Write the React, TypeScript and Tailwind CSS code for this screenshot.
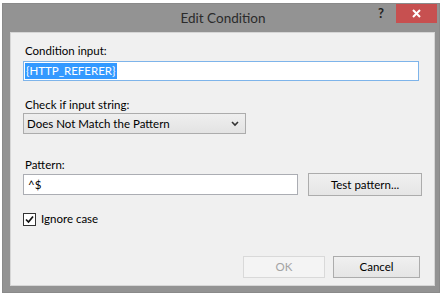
import React from "react";

const font = { fontFamily: 'Lato, "Noto Sans", sans-serif' };

export default function App() {
  return (
    <div className="w-[442px] h-[300px] bg-white pt-[3px] pl-[2px]" style={font}>
      <div className="w-[438px] h-[290px] bg-[#939393] border border-[#8a8a8a] flex flex-col">
        {/* Title bar */}
        <div className="h-[28px] flex relative shrink-0">
          <div className="flex-1 flex items-center justify-center pt-[1px] text-[13.5px] text-[#2b2b2b] pl-[4px]">
            Edit Condition
          </div>
          <div className="absolute right-[2px] top-0 flex items-start">
            <div className="w-[20px] h-[19px] flex items-center justify-center text-[13px] font-bold text-[#222] mr-[5px]">?</div>
            <div className="w-[41px] h-[19px] bg-[#c75050] flex items-center justify-center">
              <svg width="9" height="9" viewBox="0 0 9 9">
                <path d="M1 1 L8 8 M8 1 L1 8" stroke="white" strokeWidth="2" />
              </svg>
            </div>
          </div>
        </div>
        {/* Content */}
        <div className="ml-[7px] mr-[4px] h-[254px] bg-[#f0f0f0] border border-[#d6d6d6] pl-[12px] text-[11.5px] text-black flex flex-col">
          <div className="mt-[10px] ml-[2px] leading-[16px]">Condition input:</div>
          <div className="mt-[2px] w-[396px] h-[20px] bg-white border border-[#7eb4ea] flex items-center pl-[1px]">
            <span className="bg-[#3399ff] text-white leading-[16px] px-[1px]">{"{HTTP_REFERER}"}</span>
          </div>
          <div className="mt-[16px] ml-[2px] leading-[16px]">Check if input string:</div>
          <div className="mt-[0px] w-[223px] h-[21px] bg-gradient-to-b from-[#efefef] to-[#e3e3e3] border border-[#acacac] flex items-center justify-between pl-[3px] pr-[6px]">
            <span className="leading-[16px]">Does Not Match the Pattern</span>
            <svg width="8" height="6" viewBox="0 0 8 6">
              <path d="M1 1 L4 4 L7 1" stroke="#333" strokeWidth="1.6" fill="none" />
            </svg>
          </div>
          <div className="mt-[23px] ml-[2px] leading-[16px]">Pattern:</div>
          <div className="flex items-center mt-[0px]">
            <div className="w-[275px] h-[21px] bg-white border border-[#abadb3] flex items-center pl-[4px] leading-[16px]">^$</div>
            <div className="ml-[10px] w-[114px] h-[23px] bg-gradient-to-b from-[#f0f0f0] to-[#e5e5e5] border border-[#acacac] flex items-center justify-center">
              Test pattern...
            </div>
          </div>
          <div className="mt-[15px] flex items-center">
            <div className="w-[13px] h-[13px] bg-white border border-[#333] flex items-center justify-center">
              <svg width="9" height="9" viewBox="0 0 9 9">
                <path d="M1 4.5 L3.5 7 L8 1.5" stroke="#111" strokeWidth="1.7" fill="none" />
              </svg>
            </div>
            <span className="ml-[5px] leading-[16px]">Ignore case</span>
          </div>
          <div className="mt-[29px] flex justify-end pr-[14px]">
            <div className="w-[82px] h-[22px] bg-[#f4f4f4] border border-[#d9d9d9] text-[#a3a3a3] flex items-center justify-center">OK</div>
            <div className="ml-[8px] w-[87px] h-[22px] bg-gradient-to-b from-[#f0f0f0] to-[#e5e5e5] border border-[#acacac] flex items-center justify-center">Cancel</div>
          </div>
        </div>
      </div>
    </div>
  );
}
